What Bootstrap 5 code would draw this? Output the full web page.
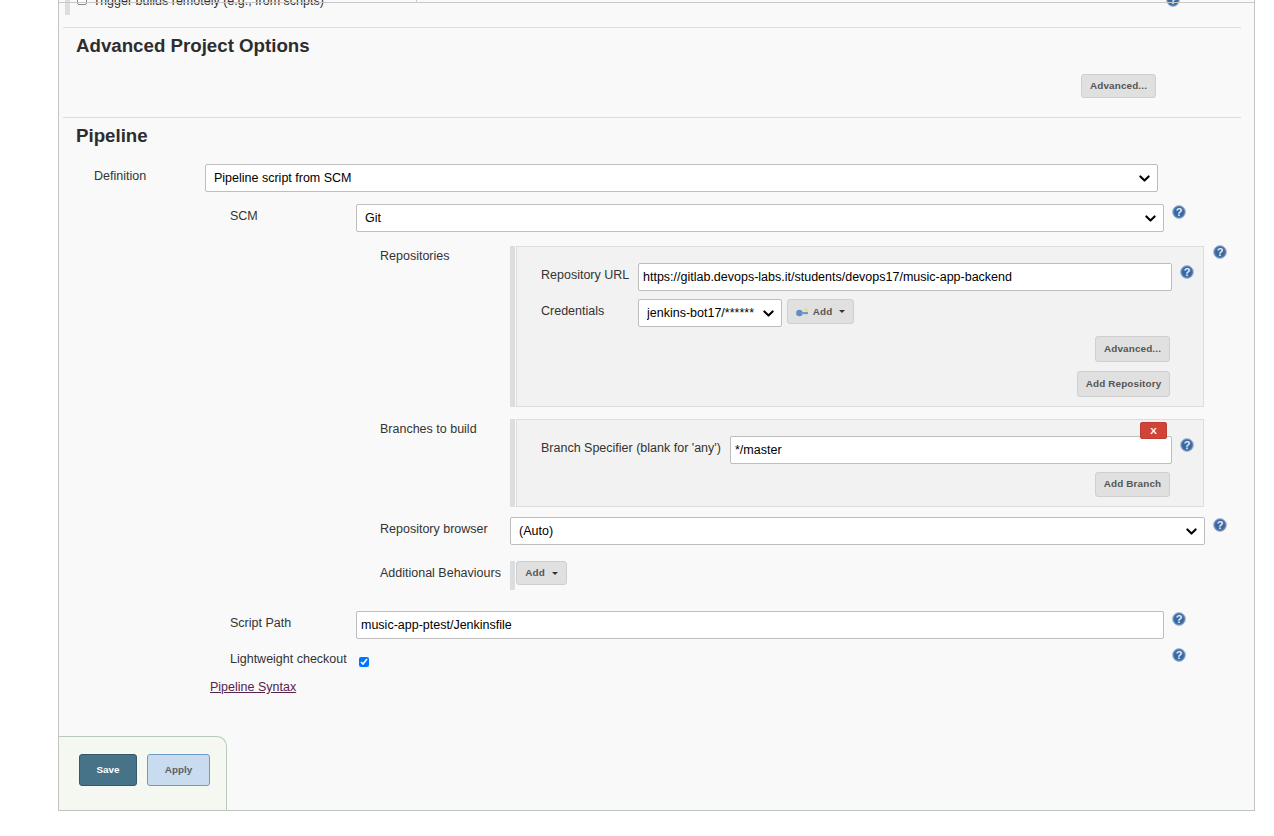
<!DOCTYPE html>
<html lang="en">
<head>
<meta charset="UTF-8">
<title>Pipeline configuration</title>
<link href="https://cdn.jsdelivr.net/npm/bootstrap@5.3.0/dist/css/bootstrap.min.css" rel="stylesheet">
<style>
body { background: #fff; font-family: "Liberation Sans", Arial, sans-serif; font-size: 12.5px; color: #333; }
.job-frame { margin-left: 58px; width: 1197px; height: 811px; background: #f9f9f9; border: 1px solid #c4c4c4; border-top: 0; border-bottom-color: #bcc8c0; position: relative; overflow: hidden; }
.top-strip { height: 27px; overflow: hidden; position: relative; padding-left: 6px; }
.top-line { position: absolute; left: 0; right: 0; top: 0; height: 3px; border-bottom: 1px solid #c8c8c8; }
.top-tick { position: absolute; left: 357px; top: 0; height: 3px; border-left: 1px solid #ccc; }
.top-bar { width: 5px; height: 15px; background: #ddd; }
.top-check { width: 10px; height: 10px; border: 1px solid #888; border-radius: 2px; margin: -5px 6px 0 7px; background: #fff; }
.top-text { margin-top: -6px; line-height: 14px; }
.top-help { position: absolute; left: 1107px; top: -7px; }
.sect { margin: 0 13px 0 4px; border-top: 1px solid #ddd; padding-left: 13px; }
.sect-adv { height: 90px; }
.sect-title { font-size: 18.7px; font-weight: 700; color: #2d2d2d; line-height: 22px; margin: 0; padding-top: 7px; }
.jbtn { background: #e0e0e0; border: 1px solid #cfcfcf; border-radius: 3px; color: #555; font-size: 9.9px; font-weight: 700; letter-spacing: .15px; line-height: 1; padding: 0; display: inline-flex; align-items: center; justify-content: center; gap: 3px; }
.jbtn:hover { background: #d8d8d8; color: #555; border-color: #cfcfcf; }
.jbtn-adv { width: 75px; height: 24px; }
.adv-slot { padding: 17px 85px 0 0; }
.jfield { border: 1px solid #bdbdbd; border-radius: 2px; height: 28px; padding: 0 4px; font-size: 12.5px; color: #000; background-color: #fff; box-shadow: none; }
.form-select.jfield { padding: 0 24px 0 8px; background-position: right 7px center; background-size: 11px 11px; background-image: url("data:image/svg+xml,%3csvg xmlns='http://www.w3.org/2000/svg' viewBox='0 0 16 16'%3e%3cpath fill='none' stroke='%23000' stroke-width='3' stroke-linecap='round' stroke-linejoin='round' d='M2 5l6 6 6-6'/%3e%3c/svg%3e"); }
.lbl { line-height: 16px; flex: none; }
.help-ic { width: 14px; height: 14px; flex: none; display: block; }
.def-row { padding-left: 18px; margin-top: 17px; }
.def-lbl { width: 111px; padding-top: 4px; }
.def-sel { width: 953px; }
.nest-a { margin-left: 154px; }
.lbl-a { width: 126px; padding-top: 4px; }
.field-a { width: 808px; }
.row-scm { margin-top: 12px; }
.nest-b { margin-left: 150px; margin-top: 14px; }
.lbl-b { width: 130px; padding-top: 2px; }
.lbl-low { padding-top: 4px; }
.bar-wrap { width: 694px; border-left: 5px solid #ddd; padding-left: 1px; flex: none; }
.inner-box { background: #f2f2f2; border: 1px solid #ddd; position: relative; }
.inner-box .form-control { margin-right: -2px; }
.box-repo { padding: 16px 33px 9px 24px; height: 161px; }
.box-branch { padding: 16px 33px 9px 24px; height: 88px; }
.lbl-c { width: 97px; padding-top: 4px; }
.help-in { margin: 2px -24px 0 10px; }
.help-out { margin: 1px 0 0 8px; }
.help-repo { margin: -1px 0 0 9px; }
.jbtn-wide { width: 75px; height: 26px; }
.jbtn-repo { width: 93px; height: 26px; }
.jbtn-branch { width: 75px; height: 25px; padding-bottom: 2px; }
.jbtn-add { width: 67px; height: 25px; margin-left: 5px; }
.jbtn-add2 { width: 51px; height: 24px; }
.caret-ic { width: 0; height: 0; border: 3.5px solid transparent; border-top-color: #333; border-bottom: 0; margin-left: 4px; }
.btn-remove { position: absolute; top: 2px; right: 36px; width: 27px; height: 17px; background: #cf4436; border: 1px solid #c03c2e; border-radius: 2px; color: #fff; font-size: 9.9px; font-weight: 700; padding: 0; line-height: 1; }
.field-browser { width: 695px; }
.cred-sel { width: 144px; }
.branch-lbl { width: 189px; padding-top: 4px; }
.foot-row { margin-top: 9px; }
.row-branch { margin-top: 12px; }
.row-browser { margin-top: 10px; }
.row-behav { margin-top: 16px; }
.behav-bar { height: 29px; }
.path-row { margin-top: 21px; }
.light-row { margin-top: 11px; height: 20px; }
.light-lbl { width: 129px; padding-top: 1px; }
.jcheck { width: 10px; height: 10px; margin: 7px 0 0 0; accent-color: #0075ff; flex: none; }
.light-help { margin: -2px 0 0 803px; }
.syntax-link { margin: 9px 0 0 134px; color: #56234d; display: inline-block; line-height: 16px; }
.save-panel { position: absolute; left: 0; bottom: 0; width: 168px; height: 74px; background: #f5f8f0; border: 1px solid #b9c9bd; border-left: 0; border-bottom: 0; border-top-right-radius: 10px; padding: 17px 0 0 20px; }
.btn-save, .btn-apply { height: 32px; border-radius: 3px; font-size: 9.9px; font-weight: 700; padding: 0; }
.btn-save { width: 58px; background: #477389; border: 1px solid #35586a; color: #fff; }
.btn-apply { width: 63px; background: #c9dbee; border: 1px solid #6d9bc6; color: #5b6068; margin-left: 10px; }
</style>
</head>
<body class="m-0">
<svg width="0" height="0" class="d-block">
  <symbol id="help" viewBox="0 0 14 14">
    <circle cx="7" cy="7" r="6.4" fill="#4a76ae" stroke="#a9bdd6" stroke-width="1"/>
    <circle cx="7" cy="7" r="4.7" fill="#3a679f"/>
    <text x="7" y="11" text-anchor="middle" font-family="Liberation Sans, sans-serif" font-size="11" font-weight="700" fill="#e8eef6">?</text>
  </symbol>
</svg>

<div class="job-frame">
  <div class="top-strip d-flex">
    <div class="top-bar"></div>
    <div class="top-check"></div>
    <div class="top-text">Trigger builds remotely (e.g., from scripts)</div>
    <svg class="help-ic top-help"><use href="#help"/></svg>
    <div class="top-line"></div>
    <div class="top-tick"></div>
  </div>

  <section class="sect sect-adv">
    <h2 class="sect-title">Advanced Project Options</h2>
    <div class="d-flex justify-content-end adv-slot">
      <button type="button" class="btn jbtn jbtn-adv">Advanced...</button>
    </div>
  </section>

  <section class="sect">
    <h2 class="sect-title">Pipeline</h2>

    <div class="d-flex def-row">
      <label class="lbl def-lbl">Definition</label>
      <select class="form-select jfield def-sel"><option>Pipeline script from SCM</option></select>
    </div>

    <div class="nest-a">
      <div class="d-flex row-scm">
        <label class="lbl lbl-a">SCM</label>
        <select class="form-select jfield field-a"><option>Git</option></select>
        <svg class="help-ic help-out"><use href="#help"/></svg>
      </div>

      <div class="nest-b">
        <div class="d-flex">
          <label class="lbl lbl-b">Repositories</label>
          <div class="bar-wrap">
            <div class="inner-box box-repo">
              <div class="d-flex">
                <label class="lbl lbl-c">Repository URL</label>
                <input class="form-control jfield flex-fill" value="https://gitlab.devops-labs.it/students/devops17/music-app-backend">
                <svg class="help-ic help-in"><use href="#help"/></svg>
              </div>
              <div class="d-flex mt-2">
                <label class="lbl lbl-c">Credentials</label>
                <select class="form-select jfield cred-sel"><option>jenkins-bot17/******</option></select>
                <button type="button" class="btn jbtn jbtn-add">
                  <svg width="14" height="10" viewBox="0 0 14 10"><circle cx="3.4" cy="6" r="3.2" fill="#5f8fc0"/><rect x="5" y="5" width="7" height="2.2" fill="#6f9bc6"/><path d="M10 .5l1 1.7 1.8.3-1.3 1.2.3 1.6-1.8-1.1-1.6 .6.4-1.7-1-1.2 1.6-.2z" fill="#efdc6a"/></svg>
                  Add<span class="caret-ic"></span>
                </button>
              </div>
              <div class="d-flex justify-content-end foot-row">
                <button type="button" class="btn jbtn jbtn-wide">Advanced...</button>
              </div>
              <div class="d-flex justify-content-end foot-row">
                <button type="button" class="btn jbtn jbtn-repo">Add Repository</button>
              </div>
            </div>
          </div>
          <svg class="help-ic help-repo"><use href="#help"/></svg>
        </div>

        <div class="d-flex row-branch">
          <label class="lbl lbl-b">Branches to build</label>
          <div class="bar-wrap">
            <div class="inner-box box-branch">
              <button type="button" class="btn btn-remove">X</button>
              <div class="d-flex">
                <label class="lbl branch-lbl">Branch Specifier (blank for 'any')</label>
                <input class="form-control jfield flex-fill" value="*/master">
                <svg class="help-ic help-in"><use href="#help"/></svg>
              </div>
              <div class="d-flex justify-content-end mt-2">
                <button type="button" class="btn jbtn jbtn-branch">Add Branch</button>
              </div>
            </div>
          </div>
        </div>

        <div class="d-flex row-browser">
          <label class="lbl lbl-b lbl-low">Repository browser</label>
          <select class="form-select jfield field-browser"><option>(Auto)</option></select>
          <svg class="help-ic help-out"><use href="#help"/></svg>
        </div>

        <div class="d-flex row-behav">
          <label class="lbl lbl-b lbl-low">Additional Behaviours</label>
          <div class="bar-wrap behav-bar">
            <button type="button" class="btn jbtn jbtn-add2">Add<span class="caret-ic"></span></button>
          </div>
        </div>
      </div>

      <div class="d-flex path-row">
        <label class="lbl lbl-a">Script Path</label>
        <input class="form-control jfield field-a" value="music-app-ptest/Jenkinsfile">
        <svg class="help-ic help-out"><use href="#help"/></svg>
      </div>

      <div class="d-flex light-row">
        <label class="lbl light-lbl">Lightweight checkout</label>
        <input type="checkbox" class="jcheck" checked>
        <svg class="help-ic light-help"><use href="#help"/></svg>
      </div>
    </div>

    <a href="#" class="syntax-link">Pipeline Syntax</a>
  </section>

  <div class="save-panel">
    <button type="button" class="btn btn-save">Save</button><button type="button" class="btn btn-apply">Apply</button>
  </div>
</div>
</body>
</html>
